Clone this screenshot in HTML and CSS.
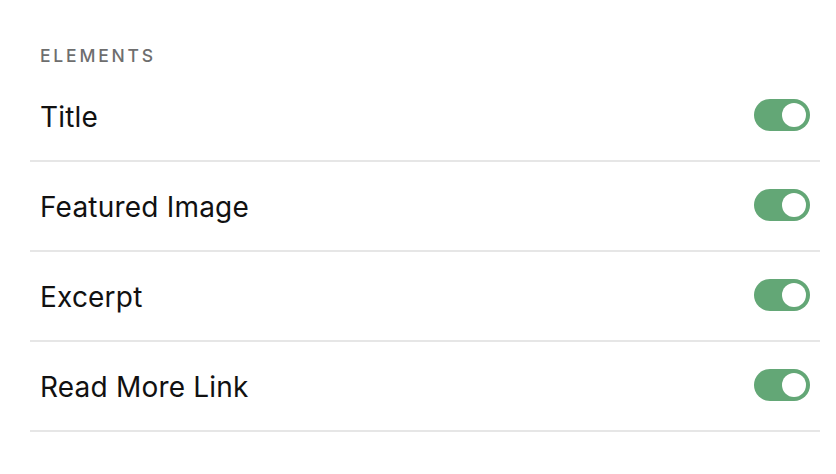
FILE: index.html
```html
<!DOCTYPE html>
<html>
<head>
<meta charset="utf-8">
<link rel="stylesheet" href="styles.css">
</head>
<body>
<section class="panel">
  <h3 class="label">ELEMENTS</h3>
  <div class="row"><span class="name">Title</span><span class="toggle"><span class="knob"></span></span></div>
  <div class="row"><span class="name">Featured Image</span><span class="toggle"><span class="knob"></span></span></div>
  <div class="row"><span class="name">Excerpt</span><span class="toggle"><span class="knob"></span></span></div>
  <div class="row"><span class="name">Read More Link</span><span class="toggle"><span class="knob"></span></span></div>
</section>
</body>
</html>
```
FILE: styles.css
```css
html, body {
  margin: 0;
  padding: 0;
  background: #ffffff;
}
body {
  font-family: Inter, "Liberation Sans", sans-serif;
  color: #111111;
}
.panel {
  margin-left: 30px;
  width: 790px;
  padding-top: 44px;
}
.label {
  margin: 0;
  padding-left: 10px;
  height: 28px;
  line-height: 24px;
  font-size: 17.5px;
  font-weight: 500;
  letter-spacing: 2.8px;
  color: #6e6e6e;
}
.row {
  display: flex;
  align-items: center;
  justify-content: space-between;
  box-sizing: border-box;
  height: 90px;
  padding: 0 10px 2px;
  border-bottom: 2px solid #e6e6e6;
}
.name {
  font-size: 28px;
  font-weight: 400;
  letter-spacing: 0.2px;
  line-height: 32px;
  padding-top: 4px;
}
.toggle {
  display: flex;
  align-items: center;
  justify-content: flex-end;
  box-sizing: border-box;
  width: 56px;
  height: 32px;
  padding: 4px;
  border-radius: 16px;
  background: #63a776;
}
.knob {
  width: 24px;
  height: 24px;
  border-radius: 50%;
  background: #ffffff;
}
```
